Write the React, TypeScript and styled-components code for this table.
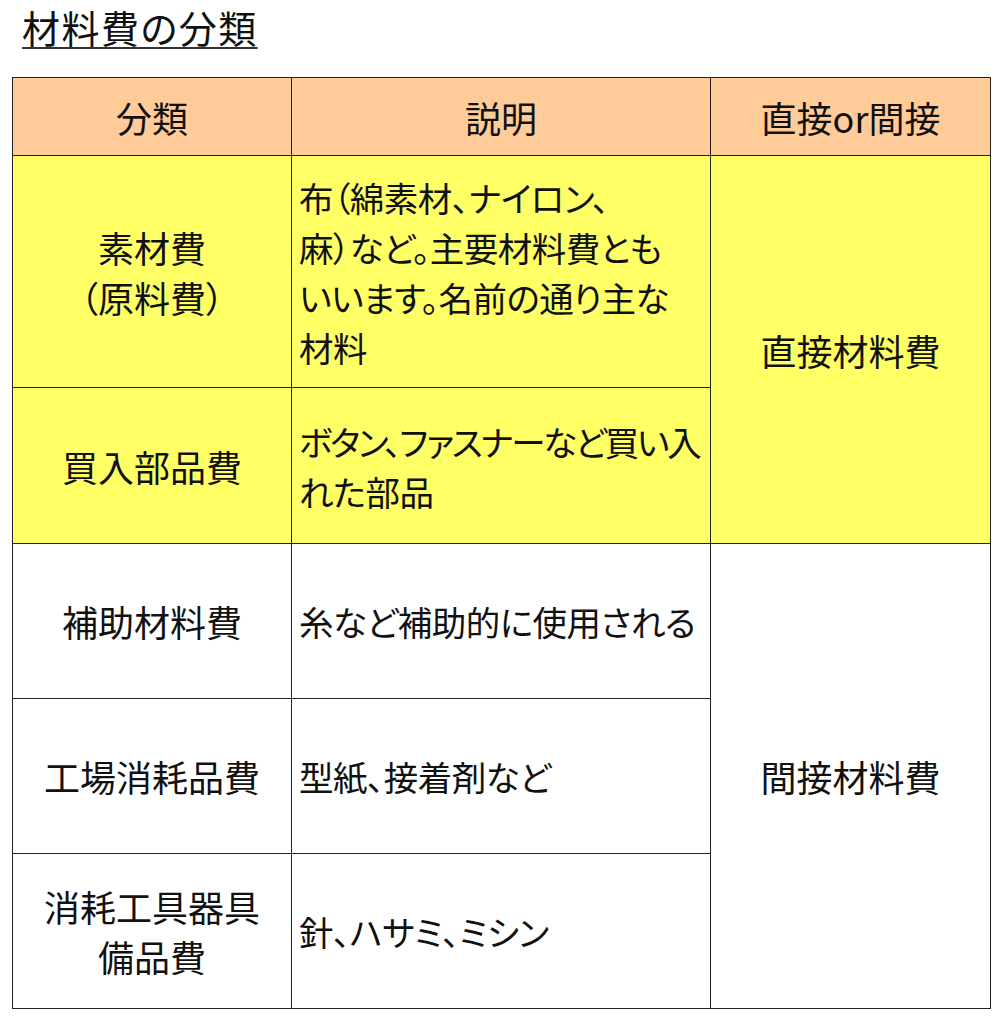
import React from "react";
import styled, { createGlobalStyle } from "styled-components";

const Global = createGlobalStyle`
  html, body { margin: 0; padding: 0; background: #ffffff; }
  body { font-family: "Noto Sans CJK JP", "Noto Sans", sans-serif; color: #111; }
`;

const Page = styled.div`
  padding: 0 0 0 12px;
  width: 1000px;
  box-sizing: border-box;
`;

const Title = styled.h1`
  margin: 0 0 0 10px;
  height: 77px;
  box-sizing: border-box;
  padding-top: 7px;
  font-size: 38px;
  line-height: 40px;
  font-weight: 400;
  font-feature-settings: "palt";
  letter-spacing: 1.5px;
  text-decoration: underline;
  text-decoration-thickness: 2px;
  text-underline-offset: 4px;
  text-decoration-color: #333;
`;

const Table = styled.table`
  border-collapse: collapse;
  table-layout: fixed;
  width: 978px;
  font-size: 36px;
  line-height: 50px;
  font-feature-settings: "palt";
`;

const Row = styled.tr<{ $h: number }>`
  height: ${(p) => p.$h}px;
`;

const HeadCell = styled.th`
  background: #ffcc99;
  border: 1.5px solid #222;
  font-weight: 400;
  text-align: center;
  vertical-align: middle;
  padding: 0;
`;

const Cell = styled.td<{ $bg?: string; $align?: "left" | "center" }>`
  background: ${(p) => p.$bg ?? "#ffffff"};
  border: 1.5px solid #222;
  text-align: ${(p) => p.$align ?? "center"};
  vertical-align: middle;
  padding: ${(p) => (p.$align === "left" ? "0 0 0 7px" : "0")};
  font-size: ${(p) => (p.$align === "left" ? "34.5px" : "36px")};
  letter-spacing: ${(p) => (p.$align === "left" ? "-0.5px" : "0")};
  white-space: nowrap;
  overflow: hidden;
`;

const Line = styled.span<{ $squeeze?: boolean }>`
  display: block;
  letter-spacing: ${(p) => (p.$squeeze ? "-2.2px" : "inherit")};
`;

const YELLOW = "#ffff66";

export default function App() {
  return (
    <>
      <Global />
      <Page>
        <Title>材料費の分類</Title>
        <Table>
          <colgroup>
            <col style={{ width: 279 }} />
            <col style={{ width: 419 }} />
            <col style={{ width: 280 }} />
          </colgroup>
          <thead>
            <Row $h={78}>
              <HeadCell>分類</HeadCell>
              <HeadCell>説明</HeadCell>
              <HeadCell>直接or間接</HeadCell>
            </Row>
          </thead>
          <tbody>
            <Row $h={232}>
              <Cell $bg={YELLOW}>
                <Line>素材費</Line>
                <Line>（原料費）</Line>
              </Cell>
              <Cell $bg={YELLOW} $align="left">
                <Line>布（綿素材、ナイロン、</Line>
                <Line>麻）など。主要材料費とも</Line>
                <Line>いいます。名前の通り主な</Line>
                <Line>材料</Line>
              </Cell>
              <Cell $bg={YELLOW} rowSpan={2}>
                直接材料費
              </Cell>
            </Row>
            <Row $h={156}>
              <Cell $bg={YELLOW}>買入部品費</Cell>
              <Cell $bg={YELLOW} $align="left">
                <Line $squeeze>ボタン、ファスナーなど買い入</Line>
                <Line>れた部品</Line>
              </Cell>
            </Row>
            <Row $h={155}>
              <Cell>補助材料費</Cell>
              <Cell $align="left">糸など補助的に使用される</Cell>
              <Cell rowSpan={3}>間接材料費</Cell>
            </Row>
            <Row $h={155}>
              <Cell>工場消耗品費</Cell>
              <Cell $align="left">型紙、接着剤など</Cell>
            </Row>
            <Row $h={155}>
              <Cell>
                <Line>消耗工具器具</Line>
                <Line>備品費</Line>
              </Cell>
              <Cell $align="left">針、ハサミ、ミシン</Cell>
            </Row>
          </tbody>
        </Table>
      </Page>
    </>
  );
}
